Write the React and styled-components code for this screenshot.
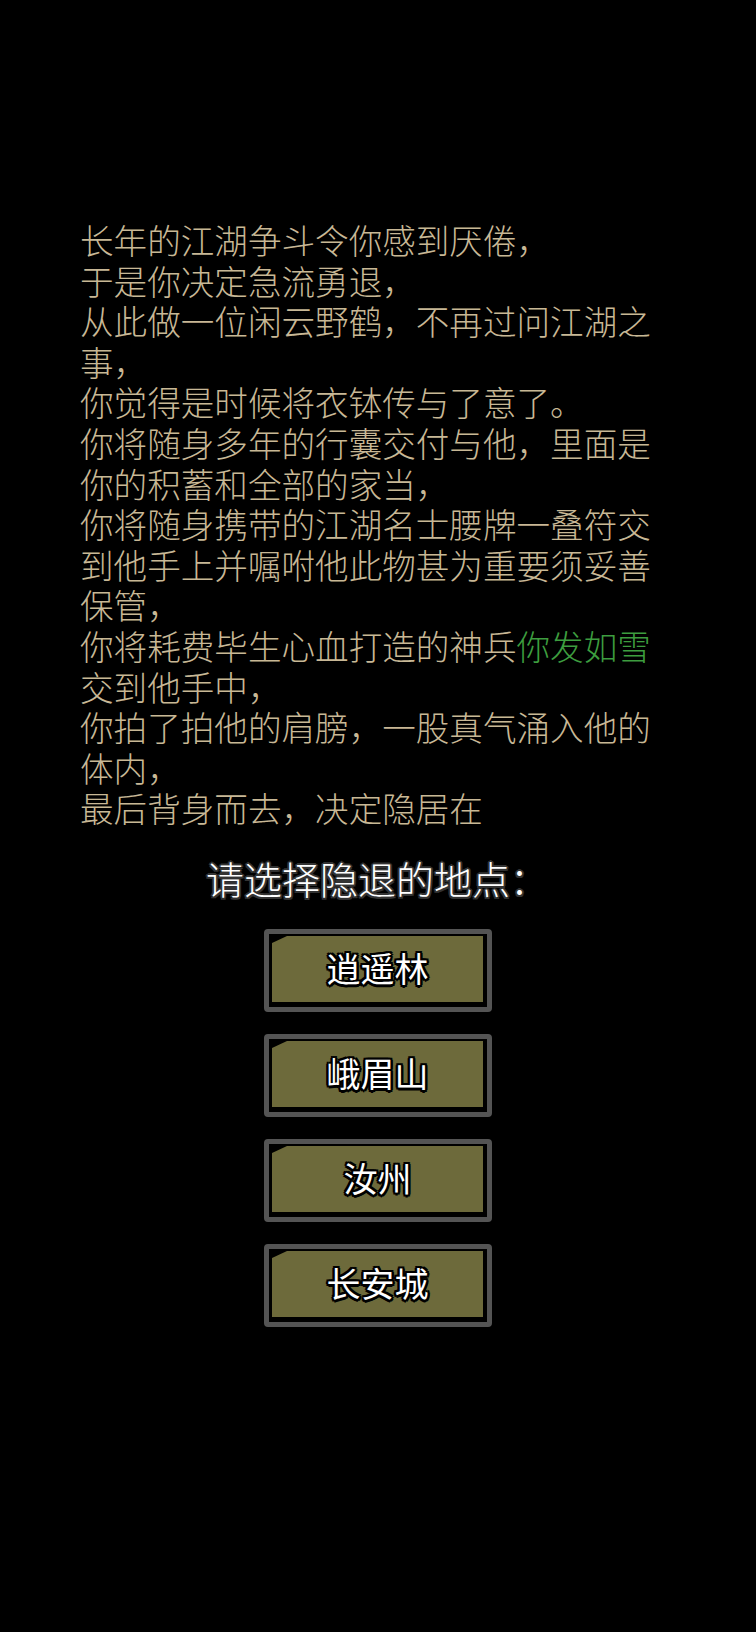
import React from 'react';
import styled, { createGlobalStyle } from 'styled-components';

const GlobalStyle = createGlobalStyle`
  html, body {
    margin: 0;
    padding: 0;
    background: #000;
  }
  body {
    font-family: "Noto Sans CJK SC", "Noto Sans", sans-serif;
  }
`;

const Screen = styled.div`
  min-height: 1632px;
  background: #000;
  padding-top: 220px;
  box-sizing: border-box;
`;

const Story = styled.div`
  width: 594px;
  margin-left: 80px;
  color: #c8b896;
  font-size: 33.6px;
  font-weight: 300;
  line-height: 40.6px;
`;

const Line = styled.p`
  margin: 0;
`;

const Weapon = styled.span`
  color: #3d9d3f;
`;

const Prompt = styled.div`
  margin-top: 27px;
  text-align: center;
  color: #fff;
  font-size: 38px;
  font-weight: 300;
  line-height: 44px;
  padding-right: 2px;
  text-shadow:
    2px 0 0 #333, -2px 0 0 #333, 0 2px 0 #333, 0 -2px 0 #333,
    1.5px 1.5px 0 #333, -1.5px 1.5px 0 #333, 1.5px -1.5px 0 #333, -1.5px -1.5px 0 #333;
`;

const Choices = styled.div`
  margin-top: 29px;
  display: flex;
  flex-direction: column;
  align-items: center;
  gap: 22px;
`;

const Choice = styled.button`
  width: 228px;
  height: 83px;
  box-sizing: border-box;
  border: 5px solid #545454;
  border-radius: 4px;
  background: #000;
  padding: 2px 4px 5px 3px;
  cursor: pointer;
  display: flex;
`;

const Plate = styled.span`
  flex: 1;
  display: flex;
  align-items: center;
  justify-content: center;
  background: #6d6a3b;
  clip-path: polygon(0 7px, 15px 0, 100% 0, 100% 100%, 0 100%);
  color: #fff;
  font-family: "Noto Sans CJK SC", sans-serif;
  font-size: 34px;
  padding-bottom: 2px;
  text-shadow:
    2.5px 0 0 #000, -2.5px 0 0 #000, 0 2.5px 0 #000, 0 -2.5px 0 #000,
    2px 2px 0 #000, -2px 2px 0 #000, 2px -2px 0 #000, -2px -2px 0 #000;
`;

const places = ['逍遥林', '峨眉山', '汝州', '长安城'];

export default function App() {
  return (
    <Screen>
      <GlobalStyle />
      <Story>
        <Line>长年的江湖争斗令你感到厌倦，</Line>
        <Line>于是你决定急流勇退，</Line>
        <Line>从此做一位闲云野鹤，不再过问江湖之事，</Line>
        <Line>你觉得是时候将衣钵传与了意了。</Line>
        <Line>你将随身多年的行囊交付与他，里面是你的积蓄和全部的家当，</Line>
        <Line>你将随身携带的江湖名士腰牌一叠符交到他手上并嘱咐他此物甚为重要须妥善保管，</Line>
        <Line>
          你将耗费毕生心血打造的神兵<Weapon>你发如雪</Weapon>交到他手中，
        </Line>
        <Line>你拍了拍他的肩膀，一股真气涌入他的体内，</Line>
        <Line>最后背身而去，决定隐居在</Line>
      </Story>
      <Prompt>请选择隐退的地点：</Prompt>
      <Choices>
        {places.map((p) => (
          <Choice key={p}>
            <Plate>{p}</Plate>
          </Choice>
        ))}
      </Choices>
    </Screen>
  );
}
